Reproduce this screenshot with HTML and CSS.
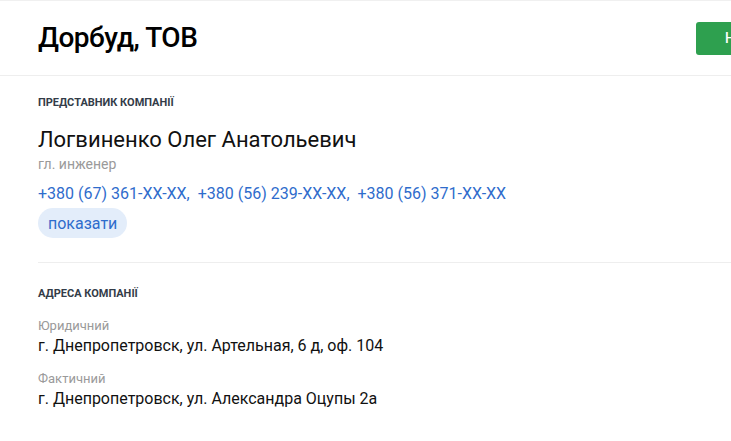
FILE: index.html
```html
<!DOCTYPE html>
<html lang="uk">
<head>
<meta charset="utf-8">
<link rel="stylesheet" href="styles.css">
</head>
<body>
<div class="page">
  <header class="header">
    <h1 class="title">Дорбуд, ТОВ</h1>
    <button class="btn-green">Написати</button>
  </header>
  <section class="block rep">
    <h2 class="label">Представник компанії</h2>
    <div class="name">Логвиненко Олег Анатольевич</div>
    <div class="role">гл. инженер</div>
    <div class="phones">
      <a class="phone">+380 (67) 361-XX-XX,</a>
      <a class="phone">+380 (56) 239-XX-XX,</a>
      <a class="phone">+380 (56) 371-XX-XX</a>
    </div>
    <button class="pill">показати</button>
  </section>
  <section class="block addr">
    <h2 class="label">Адреса компанії</h2>
    <div class="addr-item">
      <div class="addr-type">Юридичний</div>
      <div class="addr-text">г. Днепропетровск, ул. Артельная, 6 д, оф. 104</div>
    </div>
    <div class="addr-item">
      <div class="addr-type">Фактичний</div>
      <div class="addr-text">г. Днепропетровск, ул. Александра Оцупы 2а</div>
    </div>
  </section>
</div>
</body>
</html>
```
FILE: styles.css
```css
* { box-sizing: border-box; }
html, body { margin: 0; padding: 0; background: #fff; overflow: hidden; }
body { font-family: Roboto, "Noto Sans", sans-serif; color: #111; }
.page { width: 731px; border-top: 1px solid #f0f0f0; }
.header {
  height: 75px;
  display: flex;
  align-items: center;
  justify-content: space-between;
  padding-left: 38px;
  border-bottom: 1px solid #eeeeee;
  overflow: hidden;
}
.title {
  margin: 0 0 1px;
  font-size: 28px;
  font-weight: 500;
  letter-spacing: -0.5px;
  color: #000;
}
.btn-green {
  flex: none;
  width: 120px;
  height: 33px;
  margin-right: -85px;
  border: none;
  border-radius: 3px;
  background: #2ea04f;
  color: #fff;
  font-family: Roboto, sans-serif;
  font-size: 14px;
  font-weight: 500;
  text-align: left;
  padding-left: 29px;
  overflow: hidden;
  white-space: nowrap;
}
.block { margin-left: 38px; }
.rep { padding: 19px 0 24px; border-bottom: 1px solid #eeeeee; }
.label {
  margin: 0;
  font-size: 11px;
  font-weight: 700;
  text-transform: uppercase;
  color: #333c48;
  line-height: 15px;
}
.name { margin-top: 16px; font-size: 22px; line-height: 28px; color: #111; }
.role { font-size: 14px; color: #9a9a9a; line-height: 18px; margin-top: 1px; }
.phones { margin-top: 10px; display: flex; gap: 8px; }
.phone { font-size: 16px; color: #2f6ccc; line-height: 22px; }
.pill {
  margin-top: 3px;
  height: 30px;
  padding: 0 10px;
  border: none;
  border-radius: 15px;
  background: #e3edfa;
  color: #2f6ccc;
  font-family: Roboto, sans-serif;
  font-size: 16px;
}
.addr { padding-top: 23px; }
.addr-item { margin-top: 16px; }
.addr-item + .addr-item { margin-top: 13px; }
.addr-type { font-size: 13px; color: #9a9a9a; line-height: 18px; }
.addr-text { font-size: 16px; color: #111; line-height: 22px; margin-top: 0; }
```
